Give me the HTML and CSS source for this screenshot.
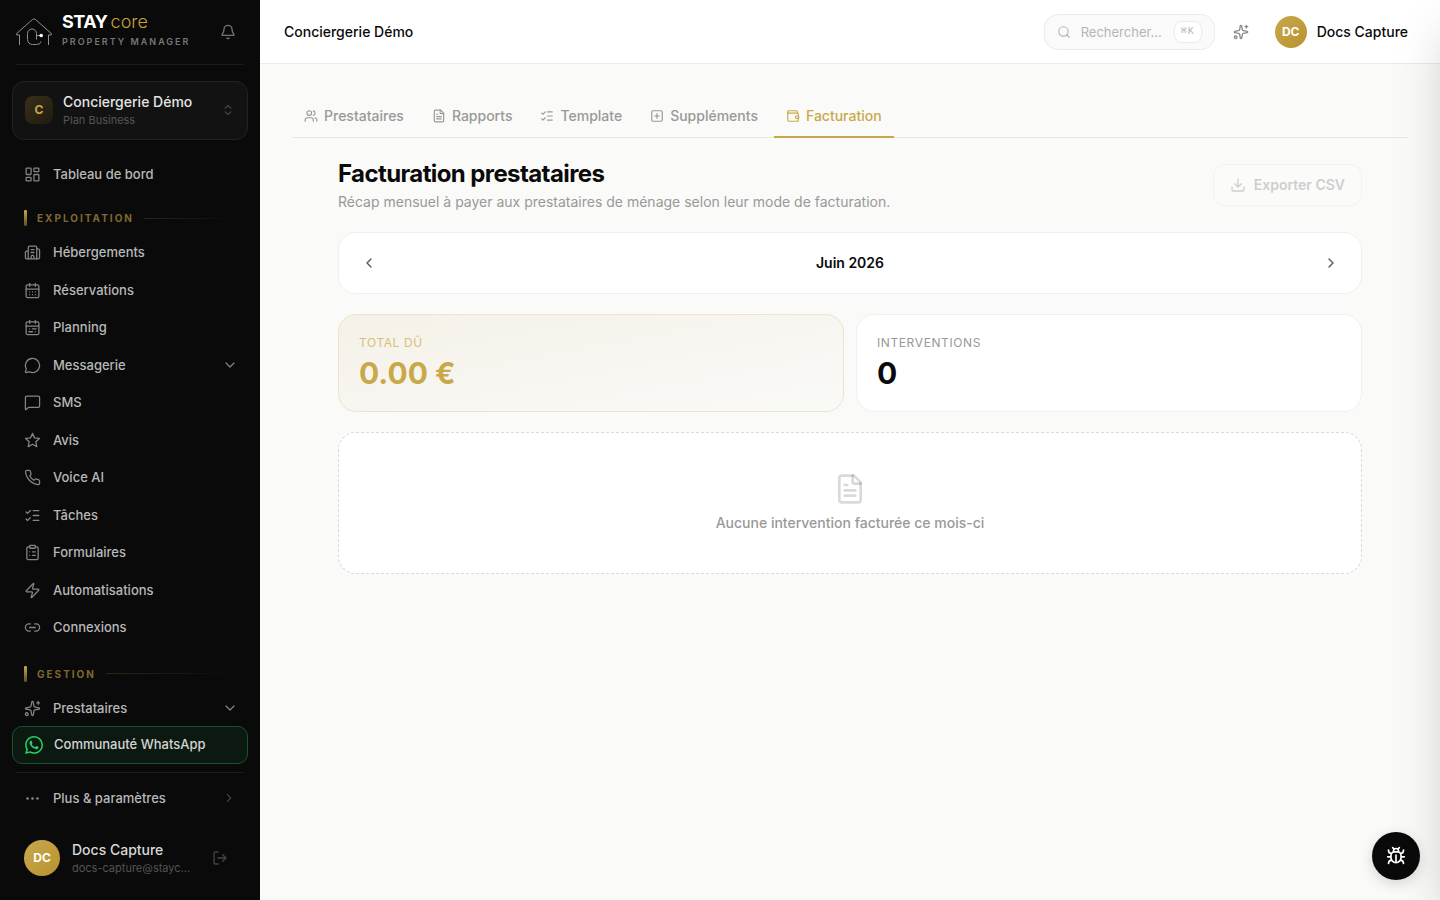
FILE: index.html
```html
<!DOCTYPE html>
<html lang="fr">
<head>
    <meta charset="UTF-8">
    <meta name="viewport" content="width=device-width, initial-scale=1.0">
    <title>Facturation prestataires - STAYcore</title>
    <link rel="stylesheet" href="styles.css">
</head>
<body>
    <!-- Shared icons -->
    <svg class="sprite" aria-hidden="true">
        <symbol id="i-sparkles" viewBox="0 0 24 24">
            <path d="M11.017 2.814a1 1 0 0 1 1.966 0l1.051 5.558a2 2 0 0 0 1.594 1.594l5.558 1.051a1 1 0 0 1 0 1.966l-5.558 1.051a2 2 0 0 0-1.594 1.594l-1.051 5.558a1 1 0 0 1-1.966 0l-1.051-5.558a2 2 0 0 0-1.594-1.594l-5.558-1.051a1 1 0 0 1 0-1.966l5.558-1.051a2 2 0 0 0 1.594-1.594zM20 2v4M22 4h-4"/><circle cx="4" cy="20" r="2"/>
        </symbol>
        <symbol id="i-list" viewBox="0 0 24 24">
            <path d="M13 5h8M13 12h8M13 19h8M3 17l2 2 4-4M3 7l2 2 4-4"/>
        </symbol>
        <symbol id="i-file" viewBox="0 0 24 24">
            <path d="M15 2H6a2 2 0 0 0-2 2v16a2 2 0 0 0 2 2h12a2 2 0 0 0 2-2V7z"/><path d="M14 2v5a1 1 0 0 0 1 1h5"/><path d="M10 9H8M16 13H8M16 17H8"/>
        </symbol>
        <symbol id="i-down" viewBox="0 0 24 24"><path d="m6 9 6 6 6-6"/></symbol>
        <symbol id="i-right" viewBox="0 0 24 24"><path d="m9 18 6-6-6-6"/></symbol>
        <symbol id="i-left" viewBox="0 0 24 24"><path d="m15 18-6-6 6-6"/></symbol>
    </svg>

    <div class="app">
        <aside class="sidebar">
            <div class="brand">
                <svg class="brand-logo" viewBox="0 0 36 28">
                    <path d="M3.500 27V17H.7v-1.500L16.500 1.500q1.500-1.300 3 0L35.300 15.500V17H32.500V27"/>
                    <path d="M20.500 21.500v-6a4.500 4.500 0 0 0-9 0v6a5 5 0 0 0 5 5h4q4 0 4.500-3M20.500 17.500H25"/>
                    <circle class="brand-dot" cx="25.200" cy="17.500" r="1.800"/>
                </svg>
                <div class="brand-text">
                    <div class="brand-name"><strong>STAY</strong><span>core</span></div>
                    <div class="brand-sub">PROPERTY MANAGER</div>
                </div>
                <button class="icon-btn bell" type="button" aria-label="Notifications">
                    <svg class="icon" viewBox="0 0 24 24"><path d="M10.268 21a2 2 0 0 0 3.464 0M3.262 15.326A1 1 0 0 0 4 17h16a1 1 0 0 0 .740-1.673C19.410 13.956 18 12.499 18 8A6 6 0 0 0 6 8c0 4.499-1.411 5.956-2.738 7.326"/></svg>
                </button>
            </div>

            <button class="workspace" type="button">
                <span class="workspace-badge">C</span>
                <span class="stack">
                    <span class="workspace-name">Conciergerie Démo</span>
                    <span class="workspace-plan">Plan Business</span>
                </span>
                <svg class="icon workspace-arrows" viewBox="0 0 24 24"><path d="m7 15 5 5 5-5M7 9l5-5 5 5"/></svg>
            </button>

            <nav class="nav">
                <a class="nav-link" href="#">
                    <svg class="icon" viewBox="0 0 24 24"><rect x="3" y="3" width="7" height="9" rx="1"/><rect x="14" y="3" width="7" height="5" rx="1"/><rect x="14" y="12" width="7" height="9" rx="1"/><rect x="3" y="16" width="7" height="5" rx="1"/></svg>
                    Tableau de bord
                </a>

                <h2 class="nav-title">Exploitation</h2>
                <a class="nav-link" href="#">
                    <svg class="icon" viewBox="0 0 24 24"><path d="M10 12h4M10 8h4M14 21v-3a2 2 0 0 0-4 0v3M6 10H4a2 2 0 0 0-2 2v7a2 2 0 0 0 2 2h16a2 2 0 0 0 2-2V9a2 2 0 0 0-2-2h-2"/><path d="M6 21V5a2 2 0 0 1 2-2h8a2 2 0 0 1 2 2v16"/></svg>
                    Hébergements
                </a>
                <a class="nav-link" href="#">
                    <svg class="icon" viewBox="0 0 24 24"><path d="M8 2v4M16 2v4M3 10h18M8 14h.01M12 14h.01M16 14h.01M8 18h.01M12 18h.01M16 18h.01"/><rect x="3" y="4" width="18" height="18" rx="2"/></svg>
                    Réservations
                </a>
                <a class="nav-link" href="#">
                    <svg class="icon" viewBox="0 0 24 24"><path d="M8 2v4M16 2v4M3 10h18M8 14h.01M12 14h5M7 18h5M16 18h.01"/><rect x="3" y="4" width="18" height="18" rx="2"/></svg>
                    Planning
                </a>
                <a class="nav-link" href="#">
                    <svg class="icon" viewBox="0 0 24 24"><path d="M2.992 16.342a2 2 0 0 1 .094 1.167l-1.065 3.290a1 1 0 0 0 1.236 1.168l3.413-.998a2 2 0 0 1 1.099.092 10 10 0 1 0-4.777-4.719"/></svg>
                    Messagerie
                    <svg class="icon nav-arrow"><use href="#i-down"/></svg>
                </a>
                <a class="nav-link" href="#">
                    <svg class="icon" viewBox="0 0 24 24"><path d="M22 17a2 2 0 0 1-2 2H6.828a2 2 0 0 0-1.414.586l-2.202 2.202A.710.710 0 0 1 2 21.286V5a2 2 0 0 1 2-2h16a2 2 0 0 1 2 2z"/></svg>
                    SMS
                </a>
                <a class="nav-link" href="#">
                    <svg class="icon" viewBox="0 0 24 24"><path d="m12 2 2.900 6.300 6.900.800-5.100 4.700 1.400 6.800L12 17.200l-6.100 3.400 1.400-6.800-5.100-4.700 6.900-.8z"/></svg>
                    Avis
                </a>
                <a class="nav-link" href="#">
                    <svg class="icon" viewBox="0 0 24 24"><path d="M22 16.920v3a2 2 0 0 1-2.180 2 19.790 19.790 0 0 1-8.630-3.070 19.500 19.500 0 0 1-6-6 19.790 19.790 0 0 1-3.070-8.670A2 2 0 0 1 4.110 2h3a2 2 0 0 1 2 1.720 12.840 12.840 0 0 0 .7 2.810 2 2 0 0 1-.45 2.110L8.090 9.910a16 16 0 0 0 6 6l1.270-1.270a2 2 0 0 1 2.110-.45 12.840 12.840 0 0 0 2.810.7A2 2 0 0 1 22 16.920z"/></svg>
                    Voice AI
                </a>
                <a class="nav-link" href="#">
                    <svg class="icon"><use href="#i-list"/></svg>
                    Tâches
                </a>
                <a class="nav-link" href="#">
                    <svg class="icon" viewBox="0 0 24 24"><rect x="8" y="2" width="8" height="4" rx="1"/><path d="M16 4h2a2 2 0 0 1 2 2v14a2 2 0 0 1-2 2H6a2 2 0 0 1-2-2V6a2 2 0 0 1 2-2h2M12 11h4M12 16h4M8 11h.01M8 16h.01"/></svg>
                    Formulaires
                </a>
                <a class="nav-link" href="#">
                    <svg class="icon" viewBox="0 0 24 24"><path d="M4 14a1 1 0 0 1-.78-1.630l9.900-10.200a.5.5 0 0 1 .86.460l-1.920 6.020A1 1 0 0 0 13 10h7a1 1 0 0 1 .78 1.630l-9.900 10.200a.5.5 0 0 1-.86-.46l1.920-6.020A1 1 0 0 0 11 14z"/></svg>
                    Automatisations
                </a>
                <a class="nav-link" href="#">
                    <svg class="icon" viewBox="0 0 24 24"><path d="M9 17H7A5 5 0 0 1 7 7h2M15 7h2a5 5 0 1 1 0 10h-2M8 12h8"/></svg>
                    Connexions
                </a>

                <h2 class="nav-title">Gestion</h2>
                <a class="nav-link" href="#">
                    <svg class="icon"><use href="#i-sparkles"/></svg>
                    Prestataires
                    <svg class="icon nav-arrow"><use href="#i-down"/></svg>
                </a>
            </nav>

            <a class="whatsapp" href="#">
                <svg class="whatsapp-icon" viewBox="0 0 24 24"><path d="M17.472 14.382c-.297-.149-1.758-.867-2.030-.967-.273-.099-.471-.148-.670.150-.197.297-.767.966-.940 1.164-.173.199-.347.223-.644.075-.297-.150-1.255-.463-2.390-1.475-.883-.788-1.480-1.761-1.653-2.059-.173-.297-.018-.458.130-.606.134-.133.298-.347.446-.520.149-.174.198-.298.298-.497.099-.198.050-.371-.025-.520-.075-.149-.669-1.612-.916-2.207-.242-.579-.487-.500-.669-.510-.173-.008-.371-.010-.570-.010-.198 0-.520.074-.792.372-.272.297-1.040 1.016-1.040 2.479 0 1.462 1.065 2.875 1.213 3.074.149.198 2.096 3.200 5.077 4.487.709.306 1.262.489 1.694.625.712.227 1.360.195 1.871.118.571-.085 1.758-.719 2.006-1.413.248-.694.248-1.289.173-1.413-.074-.124-.272-.198-.570-.347m-5.421 7.403h-.004a9.870 9.870 0 0 1-5.031-1.378l-.361-.214-3.741.982.998-3.648-.235-.374a9.860 9.860 0 0 1-1.510-5.260c.001-5.450 4.436-9.884 9.888-9.884 2.640 0 5.122 1.030 6.988 2.898a9.825 9.825 0 0 1 2.893 6.994c-.003 5.450-4.437 9.884-9.885 9.884m8.413-18.297A11.815 11.815 0 0 0 12.050 0C5.495 0 .160 5.335.157 11.892c0 2.096.547 4.142 1.588 5.945L.057 24l6.305-1.654a11.882 11.882 0 0 0 5.683 1.448h.005c6.554 0 11.890-5.335 11.893-11.893a11.821 11.821 0 0 0-3.480-8.413z"/></svg>
                Communauté WhatsApp
            </a>

            <div class="sidebar-more">
                <a class="nav-link" href="#">
                    <svg class="icon dots" viewBox="0 0 24 24"><circle cx="12" cy="12" r="1"/><circle cx="19" cy="12" r="1"/><circle cx="5" cy="12" r="1"/></svg>
                    Plus &amp; paramètres
                    <svg class="icon nav-arrow more-arrow"><use href="#i-right"/></svg>
                </a>
            </div>

            <div class="account">
                <span class="avatar avatar-lg">DC</span>
                <span class="stack">
                    <span class="account-name">Docs Capture</span>
                    <span class="account-mail">docs-capture@stayc...</span>
                </span>
                <button class="icon-btn logout" type="button" aria-label="Se déconnecter">
                    <svg class="icon" viewBox="0 0 24 24"><path d="m16 17 5-5-5-5M21 12H9M9 21H5a2 2 0 0 1-2-2V5a2 2 0 0 1 2-2h4"/></svg>
                </button>
            </div>
        </aside>

        <div class="page">
            <header class="topbar">
                <div class="topbar-title">Conciergerie Démo</div>
                <label class="search">
                    <svg class="icon" viewBox="0 0 24 24"><circle cx="11" cy="11" r="8"/><path d="m21 21-4.300-4.300"/></svg>
                    <input type="text" placeholder="Rechercher..." aria-label="Rechercher">
                    <kbd>⌘K</kbd>
                </label>
                <button class="icon-btn assistant" type="button" aria-label="Assistant">
                    <svg class="icon"><use href="#i-sparkles"/></svg>
                </button>
                <button class="user" type="button">
                    <span class="avatar">DC</span>
                    Docs Capture
                </button>
            </header>

            <main class="content">
                <nav class="tabs">
                    <a class="tab" href="#">
                        <svg class="icon" viewBox="0 0 24 24"><path d="M16 21v-2a4 4 0 0 0-4-4H6a4 4 0 0 0-4 4v2M16 3.128a4 4 0 0 1 0 7.744M22 21v-2a4 4 0 0 0-3-3.870"/><circle cx="9" cy="7" r="4"/></svg>
                        Prestataires
                    </a>
                    <a class="tab" href="#">
                        <svg class="icon"><use href="#i-file"/></svg>
                        Rapports
                    </a>
                    <a class="tab" href="#">
                        <svg class="icon"><use href="#i-list"/></svg>
                        Template
                    </a>
                    <a class="tab" href="#">
                        <svg class="icon" viewBox="0 0 24 24"><rect x="3" y="3" width="18" height="18" rx="2"/><path d="M8 12h8M12 8v8"/></svg>
                        Suppléments
                    </a>
                    <a class="tab active" href="#" aria-current="page">
                        <svg class="icon" viewBox="0 0 24 24"><path d="M19 7V4a1 1 0 0 0-1-1H5a2 2 0 0 0 0 4h15a1 1 0 0 1 1 1v4h-3a2 2 0 0 0 0 4h3a1 1 0 0 0 1-1v-2a1 1 0 0 0-1-1"/><path d="M3 5v14a2 2 0 0 0 2 2h15a1 1 0 0 0 1-1v-4"/></svg>
                        Facturation
                    </a>
                </nav>

                <div class="billing">
                    <div class="billing-head">
                        <div>
                            <h1>Facturation prestataires</h1>
                            <p>Récap mensuel à payer aux prestataires de ménage selon leur mode de facturation.</p>
                        </div>
                        <button class="export" type="button" disabled>
                            <svg class="icon" viewBox="0 0 24 24"><path d="M12 15V3M21 15v4a2 2 0 0 1-2 2H5a2 2 0 0 1-2-2v-4M7 10l5 5 5-5"/></svg>
                            Exporter CSV
                        </button>
                    </div>

                    <div class="card month">
                        <button class="icon-btn" type="button" aria-label="Mois précédent">
                            <svg class="icon"><use href="#i-left"/></svg>
                        </button>
                        <span>Juin 2026</span>
                        <button class="icon-btn" type="button" aria-label="Mois suivant">
                            <svg class="icon"><use href="#i-right"/></svg>
                        </button>
                    </div>

                    <div class="stats">
                        <div class="card stat stat-gold">
                            <div class="stat-label">Total dû</div>
                            <div class="stat-value">0.00 €</div>
                        </div>
                        <div class="card stat">
                            <div class="stat-label">Interventions</div>
                            <div class="stat-value">0</div>
                        </div>
                    </div>

                    <div class="card empty">
                        <svg class="icon"><use href="#i-file"/></svg>
                        <p>Aucune intervention facturée ce mois-ci</p>
                    </div>
                </div>
            </main>
        </div>
    </div>

    <button class="bug-btn" type="button" aria-label="Signaler un bug">
        <svg class="icon" viewBox="0 0 24 24"><path d="M12 20v-9M14 7a4 4 0 0 1 4 4v3a6 6 0 0 1-12 0v-3a4 4 0 0 1 4-4zM14.120 3.880 16 2M21 21a4 4 0 0 0-3.810-4M21 5a4 4 0 0 1-3.550 3.970M22 13h-4M3 21a4 4 0 0 1 3.810-4M3 5a4 4 0 0 0 3.550 3.970M6 13H2M8 2l1.880 1.880M9 7.130V6a3 3 0 1 1 6 0v1.130"/></svg>
    </button>

    <!-- Closed drawer, sits past the right edge -->
    <aside class="drawer" aria-hidden="true"></aside>
</body>
</html>
```
FILE: styles.css
```css
* {
    box-sizing: border-box;
}

body {
    margin: 0;
    font-family: Inter, "Liberation Sans", sans-serif;
    font-size: 14px;
    line-height: 20px;
    color: #0a0a0a;
    background: #fafaf8;
}

h1, h2, p {
    margin: 0;
}

a {
    color: inherit;
    text-decoration: none;
}

button {
    font: inherit;
    color: inherit;
    background: none;
    border: none;
    padding: 0;
    cursor: pointer;
}

.sprite {
    display: none;
}

.icon {
    width: 16px;
    height: 16px;
    flex-shrink: 0;
    fill: none;
    stroke: currentColor;
    stroke-width: 2;
    stroke-linecap: round;
    stroke-linejoin: round;
}

.icon-btn {
    display: flex;
    align-items: center;
    justify-content: center;
    width: 32px;
    height: 32px;
}

.stack {
    display: flex;
    flex-direction: column;
    flex: 1;
    min-width: 0;
    text-align: left;
}

.app {
    display: flex;
    min-height: 100vh;
}

/* Sidebar */
.sidebar {
    width: 260px;
    flex-shrink: 0;
    display: flex;
    flex-direction: column;
    padding: 0 12px;
    background: #0a0a0a;
    color: #b8b8b8;
}

.brand {
    display: flex;
    align-items: center;
    gap: 10px;
    height: 65px;
    margin: 0 4px 16px;
    border-bottom: 1px solid #1c1c1c;
}

.brand-logo {
    width: 36px;
    height: 28px;
    fill: none;
    stroke: #909090;
    stroke-width: 1;
}

.brand-logo .brand-dot {
    fill: #fff;
    stroke: none;
}

.brand-text {
    flex: 1;
    padding-bottom: 5px;
}

.brand-name {
    display: flex;
    gap: 3px;
    font-size: 18px;
    line-height: 20px;
    color: #fff;
}

.brand-name strong {
    letter-spacing: -0.025em;
}

.brand-name span {
    font-weight: 300;
    color: #c9a23a;
}

.brand-sub {
    margin-top: 4px;
    font-size: 9px;
    line-height: 12px;
    font-weight: 600;
    letter-spacing: 2px;
    color: #777;
    white-space: nowrap;
}

.bell {
    color: #777;
}

.workspace {
    display: flex;
    align-items: center;
    gap: 10px;
    padding: 10px 12px;
    margin-bottom: 17px;
    background: #121212;
    border: 1px solid #222;
    border-radius: 12px;
}

.workspace-badge {
    width: 28px;
    height: 28px;
    border-radius: 8px;
    background: linear-gradient(135deg, #3a3018, #1d1a11);
    color: #c9a84c;
    font-size: 12px;
    line-height: 28px;
    font-weight: 700;
}

.workspace-name {
    font-weight: 500;
    line-height: 20px;
    color: #e4e4e4;
}

.workspace-plan {
    font-size: 11px;
    line-height: 1.5;
    color: #555;
}

.workspace-arrows {
    width: 14px;
    height: 14px;
    color: #444;
}

.nav {
    display: flex;
    flex-direction: column;
    gap: 2px;
}

.nav-link {
    display: flex;
    align-items: center;
    gap: 12px;
    padding: 8px 12px;
    font-size: 13px;
    line-height: 1.5;
    font-weight: 500;
    border-radius: 10px;
}

.nav-link .icon {
    width: 17px;
    height: 17px;
    color: #858585;
    stroke-width: 1.8;
}

.nav-link .nav-arrow {
    width: 16px;
    height: 16px;
    margin-left: auto;
    margin-right: -2px;
}

.nav-title {
    display: flex;
    align-items: center;
    gap: 10px;
    margin: 16px 12px 7px;
    font-size: 10px;
    line-height: 16px;
    font-weight: 700;
    letter-spacing: 2px;
    text-transform: uppercase;
    color: #80692e;
}

.nav-link + .nav-link + .nav-title {
    margin-top: 18px;
}

.nav-title::before {
    content: "";
    width: 3px;
    height: 16px;
    border-radius: 1px;
    background: linear-gradient(#c9a84c, #5e4d20);
}

.nav-title::after {
    content: "";
    flex: 1;
    height: 1px;
    background: linear-gradient(to right, #2c2614, transparent);
}

.whatsapp {
    display: flex;
    align-items: center;
    gap: 11px;
    padding: 8px 12px;
    font-size: 13px;
    font-weight: 500;
    line-height: 1.5;
    color: #d4d4d4;
    background: #0c1911;
    border: 1px solid #14532d;
    border-radius: 10px;
}

.whatsapp-icon {
    width: 18px;
    height: 18px;
    fill: #25d366;
}

.sidebar-more {
    margin: 8px 4px 0;
    padding: 8px 0;
    border-top: 1px solid #1c1c1c;
}

.sidebar-more .nav-link {
    padding: 8px;
}

.dots circle {
    fill: currentColor;
}

.nav-link .more-arrow {
    margin-right: 0;
    width: 14px;
    height: 14px;
    color: #5a5a5a;
}

.account {
    display: flex;
    align-items: center;
    gap: 12px;
    margin-top: auto;
    padding: 12px 12px 24px;
}

.avatar {
    width: 32px;
    height: 32px;
    flex-shrink: 0;
    border-radius: 50%;
    background: linear-gradient(135deg, #c9a84c, #b8922e);
    color: #fff;
    font-size: 12px;
    line-height: 32px;
    font-weight: 700;
    text-align: center;
}

.avatar-lg {
    width: 36px;
    height: 36px;
    line-height: 36px;
}

.account-name {
    font-weight: 500;
    color: #d8d8d8;
}

.account-mail {
    font-size: 11px;
    line-height: 16px;
    color: #555;
    white-space: nowrap;
}

.logout {
    color: #444;
}

/* Top bar */
.page {
    flex: 1;
    min-width: 0;
}

.topbar {
    display: flex;
    align-items: center;
    height: 64px;
    padding: 0 32px 0 24px;
    background: #fff;
    border-bottom: 1px solid #ebebeb;
}

.topbar-title {
    flex: 1;
    font-weight: 500;
}

.search {
    display: flex;
    align-items: center;
    width: 171px;
    height: 36px;
    padding: 0 12px;
    background: #fafafa;
    border: 1px solid #ebebeb;
    border-radius: 14px;
    color: #b5b5b5;
}

.search .icon {
    width: 14px;
    height: 14px;
}

.search input {
    flex: 1;
    min-width: 0;
    margin-left: 10px;
    padding: 0;
    border: none;
    outline: none;
    background: none;
    font: inherit;
    font-size: 13px;
}

.search input::placeholder {
    color: #b5b5b5;
}

.search kbd {
    padding: 0 6px;
    font-family: "Liberation Mono", monospace;
    font-size: 10px;
    line-height: 20px;
    letter-spacing: 1px;
    background: #fff;
    border: 1px solid #ebebeb;
    border-radius: 8px;
}

.assistant {
    margin: 0 18px 0 10px;
    color: #8a8a8a;
}

.user {
    display: flex;
    align-items: center;
    gap: 10px;
    font-weight: 500;
}

/* Content */
.content {
    padding: 32px;
}

.tabs {
    display: flex;
    gap: 4px;
    border-bottom: 1px solid #e8e8e8;
}

.tab {
    display: flex;
    align-items: center;
    gap: 6px;
    padding: 10px 12px;
    margin-bottom: -1px;
    border-bottom: 2px solid transparent;
    font-weight: 500;
    color: #999;
}

.tab .icon {
    width: 14px;
    height: 14px;
}

.tab.active {
    color: #c9a84c;
    border-color: #c9a84c;
}

.billing {
    display: flex;
    flex-direction: column;
    gap: 20px;
    max-width: 1024px;
    margin: 0 auto;
    padding-top: 20px;
}

.billing-head {
    display: flex;
    align-items: center;
    justify-content: space-between;
}

.billing h1 {
    font-size: 24px;
    line-height: 32px;
    font-weight: 700;
    letter-spacing: -0.025em;
}

.billing-head p {
    margin-top: 2px;
    color: #999;
}

.export {
    display: flex;
    align-items: center;
    gap: 8px;
    padding: 10px 16px;
    font-weight: 600;
    background: #fff;
    border: 1px solid #e0e0e0;
    border-radius: 12px;
    color: #6b6b6b;
    opacity: 0.3;
    cursor: default;
}

.card {
    background: #fff;
    border: 1px solid #f0f0f0;
    border-radius: 18px;
}

.month {
    display: flex;
    align-items: center;
    justify-content: space-between;
    padding: 14px;
    font-weight: 600;
}

.month .icon {
    color: #555;
}

.stats {
    display: grid;
    grid-template-columns: 1fr 1fr;
    gap: 12px;
}

.stat {
    padding: 20px;
}

.stat-label {
    font-size: 12px;
    line-height: 16px;
    letter-spacing: 0.05em;
    text-transform: uppercase;
    color: #999;
}

.stat-value {
    margin-top: 4px;
    font-size: 30px;
    line-height: 36px;
    font-weight: 700;
}

.stat-gold {
    background: linear-gradient(to bottom right, #f5f1e8, #fafaf8);
    border-color: #eee4c8;
    color: #c9a84c;
}

.stat-gold .stat-label {
    color: #d9c07a;
}

.empty {
    display: flex;
    flex-direction: column;
    align-items: center;
    gap: 8px;
    padding: 40px;
    border: 1px dashed #d9d9d9;
    font-weight: 500;
    color: #999;
}

.empty .icon {
    width: 32px;
    height: 32px;
    color: rgba(0, 0, 0, 0.15);
}

.bug-btn {
    position: fixed;
    right: 20px;
    bottom: 20px;
    display: flex;
    align-items: center;
    justify-content: center;
    width: 48px;
    height: 48px;
    border-radius: 50%;
    background: #0a0a0a;
    color: #fff;
    box-shadow: 0 4px 14px rgba(0, 0, 0, 0.15);
}

.bug-btn .icon {
    width: 20px;
    height: 20px;
}

.drawer {
    position: fixed;
    top: 0;
    bottom: 0;
    left: 100%;
    width: 420px;
    background: #fff;
    box-shadow: 0 25px 50px -12px rgba(0, 0, 0, 0.25);
}
```
